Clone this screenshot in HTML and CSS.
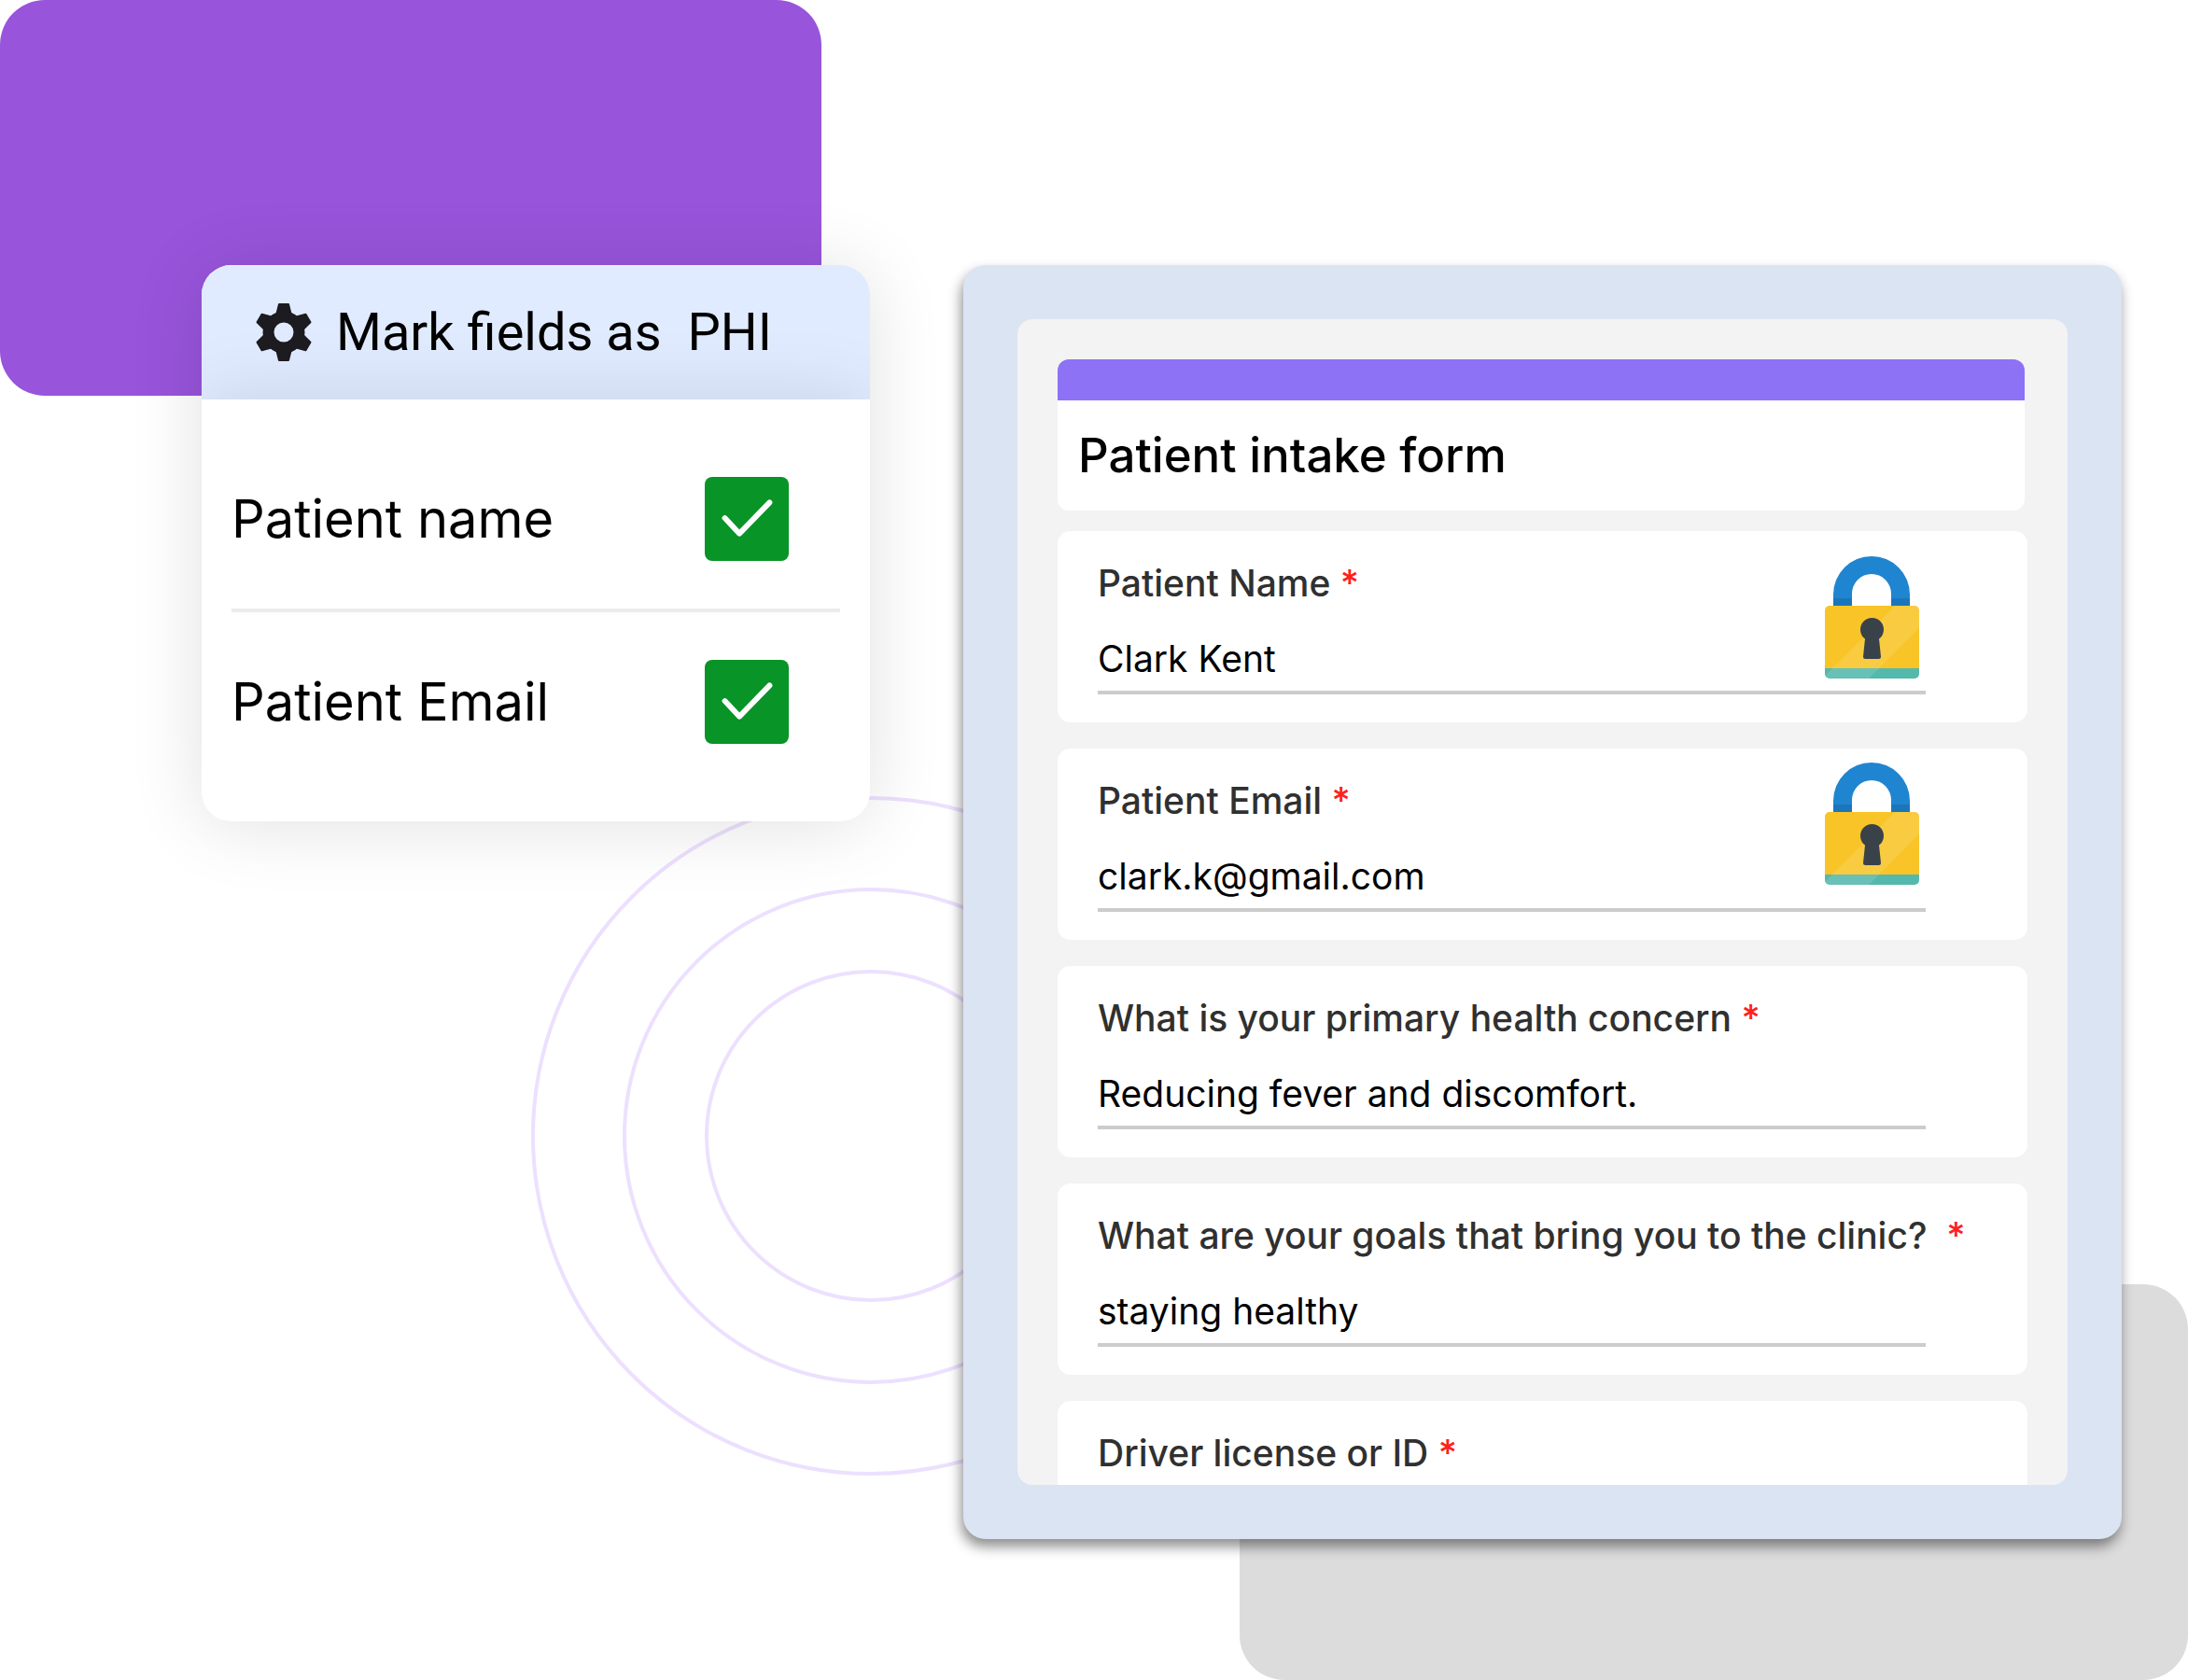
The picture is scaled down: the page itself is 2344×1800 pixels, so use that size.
FILE: index.html
```html
<!DOCTYPE html>
<html lang="en">
<head>
  <meta charset="UTF-8">
  <meta name="viewport" content="width=device-width, initial-scale=1.0">
  <title>Patient intake form</title>
  <link rel="stylesheet" href="styles.css">
</head>
<body>

  <svg class="symbols" aria-hidden="true">
    <symbol id="lock" viewBox="0 0 101 131">
      <path d="M9 54V41a41 41 0 0 1 82 0v13H71V40a21 21 0 0 0-42 0v14z" fill="#1f85d0"/>
      <path d="M9 45h20v9H9zM71 45h20v9H71z" fill="#1b75bb"/>
      <path d="M0 120V58a5 5 0 0 1 5-5h91a5 5 0 0 1 5 5v62z" fill="#f8c427"/>
      <path d="M0 120h101v6a5 5 0 0 1-5 5H5a5 5 0 0 1-5-5z" fill="#54b8ad"/>
      <path d="M75 53h21a5 5 0 0 1 5 5v19l-54 54H5a5 5 0 0 1-5-3z" fill="#fff" fill-opacity=".12"/>
      <path d="M43 88.500a12.500 12.500 0 1 1 15 0l2 19q0 2.500-2.500 2.500h-14q-2.500 0-2.500-2.500z" fill="#3a4249"/>
      <path d="M38 81a12.500 12.500 0 1 1 25 0a12.500 12.500 0 0 0-25 0z" fill="#2c3238"/>
    </symbol>
  </svg>

  <main class="scene">
    <div class="shape shape-purple"></div>
    <div class="shape shape-gray"></div>
    <svg class="rings" viewBox="0 0 730 730" aria-hidden="true">
      <circle cx="365" cy="365" r="362"/>
      <circle cx="365" cy="365" r="264"/>
      <circle cx="365" cy="365" r="176"/>
    </svg>

    <section class="phi-card">
      <header class="phi-header">
        <svg class="gear" viewBox="-32 -32 64 64" aria-hidden="true">
          <defs>
            <path id="tooth" d="M-5-30H5L8-18H-8z"/>
          </defs>
          <g fill="#1c1b20" stroke="#1c1b20" stroke-width="2" stroke-linejoin="round">
            <use href="#tooth"/>
            <use href="#tooth" transform="rotate(60)"/>
            <use href="#tooth" transform="rotate(120)"/>
            <use href="#tooth" transform="rotate(180)"/>
            <use href="#tooth" transform="rotate(240)"/>
            <use href="#tooth" transform="rotate(300)"/>
          </g>
          <circle r="16.500" fill="none" stroke="#1c1b20" stroke-width="12"/>
        </svg>
        <h2>Mark fields as &nbsp;PHI</h2>
      </header>
      <div class="phi-body">
        <div class="phi-row">
          <label for="phiName">Patient name</label>
          <input type="checkbox" id="phiName" checked>
        </div>
        <div class="phi-row">
          <label for="phiEmail">Patient Email</label>
          <input type="checkbox" id="phiEmail" checked>
        </div>
      </div>
    </section>

    <section class="form-panel">
      <form class="form-screen">
        <div class="form-title">
          <h1>Patient intake form</h1>
        </div>

        <div class="form-group">
          <label for="name">Patient Name <span class="required">*</span></label>
          <input type="text" id="name" value="Clark Kent">
          <svg class="lock"><use href="#lock"/></svg>
        </div>

        <div class="form-group">
          <label for="email">Patient Email <span class="required">*</span></label>
          <input type="email" id="email" value="clark.k@gmail.com">
          <svg class="lock lock-high"><use href="#lock"/></svg>
        </div>

        <div class="form-group">
          <label for="concern">What is your primary health concern <span class="required">*</span></label>
          <input type="text" id="concern" value="Reducing fever and discomfort.">
        </div>

        <div class="form-group">
          <label for="goals">What are your goals that bring you to the clinic? &nbsp;<span class="required">*</span></label>
          <input type="text" id="goals" value="staying healthy">
        </div>

        <div class="form-group">
          <label for="license">Driver license or ID <span class="required">*</span></label>
          <input type="text" id="license">
        </div>
      </form>
    </section>
  </main>

</body>
</html>
```
FILE: styles.css
```css
* {
  box-sizing: border-box;
}

body {
  margin: 0;
  font-family: Inter, Arial, sans-serif;
  background-color: #fff;
  color: #000;
}

h1,
h2 {
  margin: 0;
}

.symbols {
  display: none;
}

.scene {
  position: relative;
  display: grid;
  grid-template-columns: minmax(0, 716fr) minmax(0, 1241fr);
  grid-template-rows: minmax(0, 1fr);
  gap: 100px;
  height: 100vh;
  padding: 284px 71px 151px 216px;
  overflow: hidden;
}

/* background shapes */
.shape {
  position: absolute;
  height: 424px;
  border-radius: 48px;
}

.shape-purple {
  top: 0;
  left: 0;
  width: 880px;
  background-color: #9854db;
}

.shape-gray {
  right: 0;
  bottom: 0;
  width: 1016px;
  background-color: #dcdcdc;
}

.rings {
  position: absolute;
  top: 852px;
  left: 568px;
  width: 730px;
  fill: none;
  stroke: #ede0ff;
  stroke-width: 4;
}

/* PHI card */
.phi-card {
  position: relative;
  align-self: start;
  border-radius: 32px;
  overflow: hidden;
  background-color: #fff;
  box-shadow: 0 4px 80px rgba(0, 0, 0, 0.12);
}

.phi-header {
  display: flex;
  align-items: center;
  gap: 24px;
  height: 144px;
  padding: 0 56px;
  background-color: #e0ebff;
}

.phi-header h2 {
  font-family: Roboto, Arial, sans-serif;
  font-size: 56px;
  font-weight: 400;
  line-height: 64px;
}

.gear {
  width: 64px;
  height: 64px;
}

.phi-body {
  padding: 32px;
  background-color: #fff;
  box-shadow: 0 4px 80px rgba(0, 0, 0, 0.12);
}

.phi-row {
  display: flex;
  align-items: center;
  justify-content: space-between;
  height: 192px;
  padding-right: 55px;
}

.phi-row + .phi-row {
  border-top: 4px solid #ebebeb;
  height: 196px;
}

.phi-row label {
  font-size: 56px;
  line-height: 64px;
}

.phi-row input {
  appearance: none;
  width: 90px;
  height: 90px;
  margin: 0;
  border-radius: 8px;
  background-color: #fff;
  border: 4px solid #089427;
}

.phi-row input:checked {
  border: none;
  background: #089427 url("data:image/svg+xml,%3Csvg xmlns='http://www.w3.org/2000/svg' viewBox='0 0 92 92'%3E%3Cpath d='M22 45l16 17L71 28' fill='none' stroke='white' stroke-width='6' stroke-linecap='round' stroke-linejoin='round'/%3E%3C/svg%3E");
}

/* intake form */
.form-panel {
  position: relative;
  padding: 58px;
  border-radius: 24px;
  background-color: #dae4f3;
  box-shadow: -2px 8px 14px rgba(0, 0, 0, 0.45);
}

.form-screen {
  height: 100%;
  padding: 43px;
  border-radius: 16px;
  background-color: #f3f3f3;
  overflow: hidden;
}

.form-title {
  margin: 0 3px 22px 0;
  padding: 27px 22px;
  border-top: 44px solid #8d72f6;
  border-radius: 12px;
  background-color: #fff;
}

.form-title h1 {
  font-size: 51px;
  font-weight: 500;
  line-height: 64px;
}

.form-group {
  position: relative;
  margin-bottom: 28px;
  padding: 32px 109px 30px 43px;
  border-radius: 14px;
  background-color: #fff;
}

.form-group label {
  display: block;
  margin-bottom: 33px;
  color: #303030;
  font-size: 39px;
  font-weight: 500;
  line-height: 48px;
  white-space: nowrap;
}

.form-group input {
  display: block;
  width: 100%;
  height: 62px;
  padding: 0 0 12px;
  border: none;
  border-bottom: 4px solid #ccc;
  outline: none;
  background: none;
  color: #000;
  font-family: inherit;
  font-size: 39px;
}

.required {
  color: #ff2020;
}

.lock {
  position: absolute;
  top: 27px;
  right: 116px;
  width: 101px;
  height: 131px;
}

.lock-high {
  top: 15px;
}
```
